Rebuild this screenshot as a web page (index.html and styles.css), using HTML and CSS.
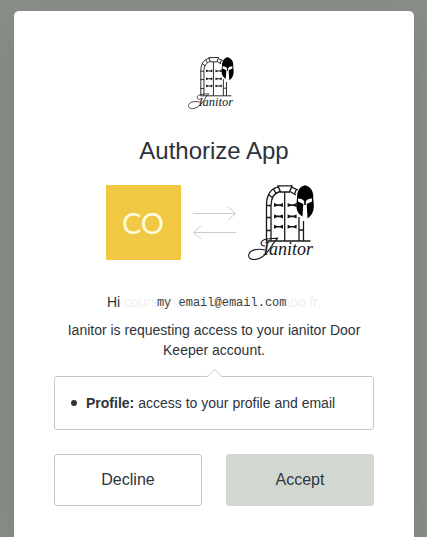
FILE: index.html
```html
<!DOCTYPE html>
<html lang="en">
<head>
<meta charset="utf-8">
<meta name="viewport" content="width=device-width, initial-scale=1">
<title>Authorize App</title>
<link rel="stylesheet" href="styles.css">
</head>
<body>
<main class="card">
  <svg class="logo-small" viewBox="0 0 75 75" role="img" aria-label="Ianitor">
    <g id="ianitor">
      <g fill="none" stroke="#16181a" stroke-width="1.3">
        <path d="M30 .8H44L41.500 7H32.500Z"/>
        <path d="M18.500 56V20C18.500 10 23 3 30.500 2.200"/>
        <path d="M23 56V21C23 13 26 8 32 6.500"/>
        <path d="M43.500 2.200L50 5M42 6.500L48 10M48.500 4L46.500 9"/>
        <path d="M51 32V56M55.500 36V56M51 45H55.500"/>
        <path d="M18 20.500H23M18 32.500H23M18 45.500H23M20.500 9.500L25 13M25.500 4L28 8.500"/>
        <path d="M36.700 7V56"/>
        <path d="M18 56H62.500"/>
      </g>
      <g fill="#16181a">
        <path id="bow" d="M26 18.100L29 19.300H32L35 18.100V22.100L32 20.900H29L26 22.100Z"/>
        <use href="#bow" y="11.300"/>
        <use href="#bow" y="21.700"/>
        <use href="#bow" x="13.600"/>
        <use href="#bow" x="13.600" y="11.300"/>
        <use href="#bow" x="13.600" y="21.700"/>
        <path fill="#000" d="M57 .3C61 1 65 5 65.200 10C65 14 66 18 65.800 22C65.500 27 63.500 31 59.500 33.500L58.700 19L64 16.500V13.500C61 13.500 58.500 14.500 57.800 16.500V20H56.200V16.500C55.500 14.500 53 13.500 50 13.500V16.500L55.300 19L54.500 31.500C50.500 29 48.500 26 48.400 21C48.300 17 49.300 14 49.200 10C49.500 5 53 1 57 .3Z"/>
      </g>
      <path d="M17 61C11 61 12 55 19 54C23 53 26 54 30 53C24 58 22 67 14 72C8 76 0 75 .700 70C1.500 65 9 63 17 65" fill="none" stroke="#16181a" stroke-width="1.100"/>
      <text class="wordmark" x="15" y="70">Ianitor</text>
    </g>
  </svg>
  <h1>Authorize App</h1>

  <div class="link-row">
    <div class="avatar">CO</div>
    <svg class="arrows" viewBox="0 0 43 34" aria-hidden="true">
      <path d="M0 7.500H42M35 1L42.500 7.500L35 14M43 26.500H1M8 20L.500 26.500L8 33"/>
    </svg>
    <svg class="logo-large" viewBox="0 0 75 75" role="img" aria-label="Ianitor"><use href="#ianitor"/></svg>
  </div>

  <p class="greeting">Hi <span class="ghost">coursycomeifinforam@yahoo.fr,</span><span class="email">my email@email.com</span></p>
  <p class="request">Ianitor is requesting access to your ianitor Door Keeper account.</p>

  <div class="scopes">
    <ul>
      <li><strong>Profile:</strong> access to your profile and email</li>
    </ul>
  </div>

  <form class="actions">
    <button type="button" class="decline">Decline</button>
    <button type="button" class="accept">Accept</button>
  </form>
</main>
</body>
</html>
```
FILE: styles.css
```css
* {
  box-sizing: border-box;
}

body {
  margin: 0;
  padding: 11px 13px 0 14px;
  background: #8a9089;
  color: #2d333a;
  font: 14px/20px "Liberation Sans", Arial, sans-serif;
}

.card {
  display: flex;
  flex-direction: column;
  align-items: center;
  max-width: 400px;
  min-height: calc(100vh - 11px);
  margin: 0 auto;
  padding: 46px 40px 31px;
  background: #fff;
  border-radius: 5px 5px 0 0;
  box-shadow: 0 12px 40px rgba(0, 0, 0, 0.12);
  text-align: center;
}

.logo-small {
  width: 52px;
  height: 52px;
}

.logo-large {
  width: 75px;
  height: 75px;
}

.wordmark {
  fill: #16181a;
  font: italic 18px "Liberation Serif", serif;
}

h1 {
  margin: 28px 0 20px;
  font-size: 24px;
  font-weight: 400;
  line-height: 28px;
}

.link-row {
  display: flex;
  align-items: center;
  gap: 12px;
}

.avatar {
  width: 75px;
  height: 75px;
  background: #f0c843;
  color: #fffde0;
  font: 400 29px/75px Lato, sans-serif;
}

.arrows {
  width: 43px;
  height: 34px;
  fill: none;
  stroke: #c9cdd2;
}

p {
  margin: 0;
}

.greeting {
  position: relative;
  margin: 32px 0 8px;
}

.ghost {
  color: #f0f0f0;
}

.email {
  position: absolute;
  top: 1px;
  left: 50px;
  background: rgba(255, 255, 255, 0.4);
  color: #3c3f42;
  font: 12px/20px "Liberation Mono", monospace;
  white-space: nowrap;
}

.scopes {
  position: relative;
  width: 100%;
  margin: 16px 0 24px;
  padding: 16px;
  border: 1px solid #c2c8d0;
  border-radius: 3px;
  text-align: left;
}

.scopes::before {
  content: "";
  position: absolute;
  top: -6px;
  left: calc(50% - 5px);
  width: 10px;
  height: 10px;
  border: solid #d6dade;
  border-width: 1px 0 0 1px;
  background: #fff;
  transform: rotate(45deg);
}

ul {
  margin: 0;
  padding: 0;
  list-style: none;
}

li {
  display: flex;
  align-items: center;
  gap: 4px;
}

li::before {
  content: "";
  width: 6px;
  height: 6px;
  margin-right: 5px;
  border-radius: 50%;
  background: #2d333a;
}

.actions {
  display: grid;
  grid-template-columns: 1fr 1fr;
  gap: 24px;
  width: 100%;
}

button {
  height: 52px;
  border: 1px solid #c2c8d0;
  border-radius: 3px;
  background: #fff;
  color: #2d333a;
  font: 16px "Liberation Sans", Arial, sans-serif;
}

.accept {
  border-color: #d2d7cf;
  background: #d2d7cf;
  color: #2d3748;
}
```
